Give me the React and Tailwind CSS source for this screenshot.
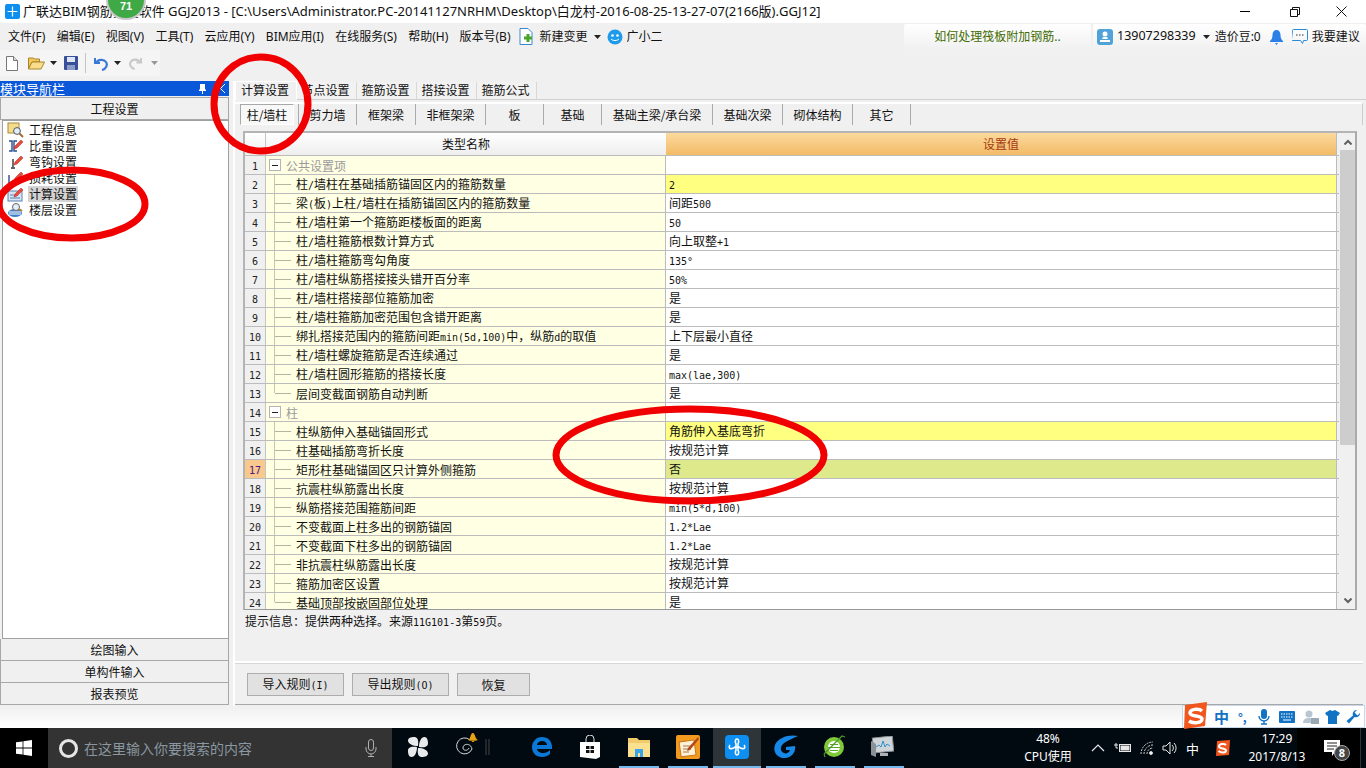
import React from 'react';

const rows = [
  { n: 1, group: true, name: '公共设置项', val: '' },
  { n: 2, name: '柱/墙柱在基础插筋锚固区内的箍筋数量', val: '2', hl: 'y' },
  { n: 3, name: '梁(板)上柱/墙柱在插筋锚固区内的箍筋数量', val: '间距500' },
  { n: 4, name: '柱/墙柱第一个箍筋距楼板面的距离', val: '50' },
  { n: 5, name: '柱/墙柱箍筋根数计算方式', val: '向上取整+1' },
  { n: 6, name: '柱/墙柱箍筋弯勾角度', val: '135°' },
  { n: 7, name: '柱/墙柱纵筋搭接接头错开百分率', val: '50%' },
  { n: 8, name: '柱/墙柱搭接部位箍筋加密', val: '是' },
  { n: 9, name: '柱/墙柱箍筋加密范围包含错开距离', val: '是' },
  { n: 10, name: '绑扎搭接范围内的箍筋间距min(5d,100)中，纵筋d的取值', val: '上下层最小直径' },
  { n: 11, name: '柱/墙柱螺旋箍筋是否连续通过', val: '是' },
  { n: 12, name: '柱/墙柱圆形箍筋的搭接长度', val: 'max(lae,300)' },
  { n: 13, name: '层间变截面钢筋自动判断', val: '是', last: true },
  { n: 14, group: true, name: '柱', val: '' },
  { n: 15, name: '柱纵筋伸入基础锚固形式', val: '角筋伸入基底弯折', hl: 'y' },
  { n: 16, name: '柱基础插筋弯折长度', val: '按规范计算' },
  { n: 17, name: '矩形柱基础锚固区只计算外侧箍筋', val: '否', hl: 'g' },
  { n: 18, name: '抗震柱纵筋露出长度', val: '按规范计算' },
  { n: 19, name: '纵筋搭接范围箍筋间距', val: 'min(5*d,100)' },
  { n: 20, name: '不变截面上柱多出的钢筋锚固', val: '1.2*Lae' },
  { n: 21, name: '不变截面下柱多出的钢筋锚固', val: '1.2*Lae' },
  { n: 22, name: '非抗震柱纵筋露出长度', val: '按规范计算' },
  { n: 23, name: '箍筋加密区设置', val: '按规范计算' },
  { n: 24, name: '基础顶部按嵌固部位处理', val: '是', last: true },
];

const menus = ['文件(F)', '编辑(E)', '视图(V)', '工具(T)', '云应用(Y)', 'BIM应用(I)', '在线服务(S)', '帮助(H)', '版本号(B)'];
const subTabs = [
  { t: '剪力墙', w: 'w-[58px]' }, { t: '框架梁', w: 'w-[59px]' }, { t: '非框架梁', w: 'w-[70px]' },
  { t: '板', w: 'w-[58px]' }, { t: '基础', w: 'w-[58px]' }, { t: '基础主梁/承台梁', w: 'w-[111px]' },
  { t: '基础次梁', w: 'w-[70px]' }, { t: '砌体结构', w: 'w-[70px]' }, { t: '其它', w: 'w-[58px]' },
];

// half-width latin beside 12px CJK, like the bitmap font in the grid
function Mix({ t }) {
  return (
    <span className="whitespace-nowrap">
      {t.split(/([\x20-\x7e°]+)/).map((s, i) =>
        /[\x20-\x7e°]/.test(s)
          ? <span key={i} className="font-['DejaVu_Sans_Mono',monospace] text-[10px]">{s}</span>
          : <span key={i}>{s}</span>
      )}
    </span>
  );
}

function Caret({ c = '#222' }) {
  return <svg width="7" height="4" viewBox="0 0 7 4"><path d="M0 0h7L3.5 4z" fill={c} /></svg>;
}

function NavIcon({ k }) {
  const pen = <path d="M8 8l6-6 2 2-6 6-3 1z" fill="#e84a3c" stroke="#b22" strokeWidth=".5" />;
  return (
    <svg width="18" height="16" viewBox="0 0 18 16" className="shrink-0">
      {k === 0 && <g><rect x="1" y="1" width="11" height="10" fill="#f3dd8c" stroke="#a98a3a" /><circle cx="10" cy="9" r="3.4" fill="#dfeefa" stroke="#555" /><path d="M12.5 11.5l3.5 3.5" stroke="#a07030" strokeWidth="2" /></g>}
      {k === 1 && <g><path d="M2 3h3v10H2M10 3H7v10h3" fill="none" stroke="#2a4d8f" strokeWidth="1.4" />{pen}</g>}
      {k === 2 && <g><path d="M6 5v8M4 14h4" stroke="#333" strokeWidth="1.4" />{pen}</g>}
      {k === 3 && <g><path d="M2 5v8h5M9 9v4" fill="none" stroke="#2a4d8f" strokeWidth="1.4" />{pen}</g>}
      {k === 4 && <g><rect x="1" y="5" width="14" height="10" fill="#d6e6f7" stroke="#5a80b0" /><path d="M3 9h7M3 12h10" stroke="#5a80b0" />{pen}</g>}
      {k === 5 && <g><ellipse cx="8" cy="11" rx="7" ry="4" fill="#3f7fc8" /><path d="M2 10h12M2 12h12" stroke="#fff" /><circle cx="9" cy="5" r="3.5" fill="#e4eef8" stroke="#666" /><path d="M12 7l3 2" stroke="#b08030" strokeWidth="2" /></g>}
    </svg>
  );
}

function Row({ r }) {
  const valBg = r.hl === 'y' ? 'bg-[#ffff80]' : r.hl === 'g' ? 'bg-[#dde98a]' : 'bg-white';
  return (
    <div className="flex h-[19px] shrink-0 border-b border-[#bcbcbc]">
      <div className={r.n === 17
        ? 'w-[21px] shrink-0 border-r border-[#c4c4c4] bg-[#f9c88c] text-[#4b1a8a] flex items-center justify-center'
        : 'w-[21px] shrink-0 border-r border-[#c4c4c4] bg-[#f0f0f0] text-[#222] flex items-center justify-center'}>
        <Mix t={String(r.n)} />
      </div>
      <div className="w-[400px] shrink-0 bg-[#ffffe3] border-r border-[#bcbcbc] flex items-center overflow-hidden">
        {r.group ? (
          <>
            <div className="ml-[3px] w-[12px] h-[12px] border border-[#b4b4b4] bg-white flex items-center justify-center shrink-0">
              <div className="w-[6px] h-px bg-[#222]" />
            </div>
            <span className="ml-[5px] pt-px text-[#9a9a9a]">{r.name}</span>
          </>
        ) : (
          <>
            <div className={r.last ? 'ml-[8px] w-px h-1/2 self-start bg-[#c8c8a8] shrink-0' : 'ml-[8px] w-px self-stretch bg-[#c8c8a8] shrink-0'} />
            <div className="w-[16px] h-px bg-[#b4b4a0] shrink-0" />
            <span className="ml-[5px] pt-px text-[#111]"><Mix t={r.name} /></span>
          </>
        )}
      </div>
      <div className={`w-[671px] shrink-0 pl-[3px] flex items-center border-r border-[#bcbcbc] text-[#111] ${valBg}`}>
        <Mix t={r.val} />
      </div>
    </div>
  );
}

function Taskbar() {
  const runs = ['ml-[227px] w-[40px]', 'ml-[9px] w-[40px]', 'ml-[5px] w-[48px]', 'ml-[5px] w-[40px]', 'ml-[9px] w-[40px]', 'ml-[9px] w-[40px]'];
  return (
    <div className="h-[40px] shrink-0 flex bg-[#010a10] text-white font-['Noto_Sans','Noto_Sans_CJK_SC',sans-serif] relative">
      <div className="w-[48px] bg-black flex items-center justify-center">
        <svg width="16" height="16" viewBox="0 0 16 16"><path d="M0 2.3l6.6-.9v6.2H0zM7.4 1.3L16 0v7.6H7.4zM0 8.4h6.6v6.2L0 13.7zM7.4 8.4H16V16l-8.6-1.3z" fill="#fff" /></svg>
      </div>
      <div className="w-[344px] bg-[#333333] flex items-center pl-[11px]">
        <div className="w-[19px] h-[19px] rounded-full border-[3px] border-[#e6e6e6] shrink-0" />
        <span className="ml-[6px] text-[14px] text-[#8a97a0] font-['Noto_Sans_CJK_SC',sans-serif]">在这里输入你要搜索的内容</span>
        <svg className="ml-[112px]" width="14" height="18" viewBox="0 0 14 18" fill="none" stroke="#b0b0b0"><rect x="4.5" y=".5" width="5" height="11" rx="2.5" /><path d="M2 8v2a5 5 0 0 0 10 0V8M7 15v2M4 17.5h6" /></svg>
      </div>
      <div className="flex flex-col flex-1">
        <div className="flex h-[38px] items-center">
          <svg className="ml-[15px]" width="22" height="22" viewBox="0 0 22 22" fill="#e8eaec"><path d="M11 10C6 10 1 8 1 4.500 1 2 4 1 7 1c3 0 5 2 4 9zM12 11c0-5 2-10 5.500-10C20 1 21 4 21 7c0 3-2 5-9 4zM11 12c5 0 10 2 10 5.500 0 2.500-3 3.500-6 3.500-3 0-5-2-4-9zM10 11c0 5-2 10-5.500 10C2 21 1 18 1 15c0-3 2-5 9-4z" /></svg>
          <svg className="ml-[25px] overflow-visible" width="22" height="20" viewBox="0 0 22 20" fill="none" stroke="#d8d8d8"><path d="M16 3A8 8 0 1 0 18 12C17 6 9 6 9 11c0 3 5 3 6 0" /><path d="M14 3c3-1 2-6 4.500-7S21 2 24 3c-1 1-9 1-10 0zM17.500 3.500a1.500 1.500 0 0 0 3 0z" fill="#e5a414" stroke="none" /></svg>
          <svg className="ml-[9px]" width="6" height="16" viewBox="0 0 6 16" stroke="#444"><path d="M1 0v16M4 0v16" /></svg>
          <svg className="ml-[41px]" width="20" height="22" viewBox="0 0 20 22"><path d="M10 1C4 1 0 6 0 11c0 6 4 10 10 10 3 0 6-1 8-3v-4c-2 2-4 3-7 3-3 0-6-2-6-4h15v-2C20 5 16 1 10 1zM5 9c0-2 3-4 5-4 3 0 5 2 5 4z" fill="#0b78d7" /></svg>
          <svg className="ml-[27px]" width="22" height="24" viewBox="0 0 22 24"><path d="M1 7h20v15l-4 2-16-2z" fill="#fff" /><path d="M7 7V4a4 4 0 0 1 8 0v3" fill="none" stroke="#ddd" /><path d="M7 11h3.500v3H7zM11.500 11H15v3h-3.500zM7 15h3.500v3H7zM11.500 15H15v3h-3.500z" fill="#111" /></svg>
          <svg className="ml-[27px]" width="22" height="20" viewBox="0 0 22 20"><path d="M0 1h9l2 2h11v17H0z" fill="#f0cb6c" /><path d="M0 6h22v14H0z" fill="#fbe08f" /><path d="M7 12h8v8h-3v-4h-2v4H7z" fill="#38a6e8" /></svg>
          <svg className="ml-[26px]" width="24" height="24" viewBox="0 0 24 24"><rect width="24" height="24" rx="2" fill="#f29a1e" /><rect x="4" y="6" width="15" height="15" transform="rotate(-8 11 13)" fill="#fdf2d8" stroke="#c9761a" /><path d="M7 11h8M7 14h8M7 17h6" stroke="#a97a4a" /><path d="M12 13L22 2l1 2-9 11-3 1z" fill="#b3471b" /></svg>
          <div className="ml-[13px] w-[48px] self-stretch bg-[#2e3539] flex items-center justify-center">
            <div className="w-[24px] h-[24px] rounded-[4px] bg-[#0c8ff0] flex items-center justify-center">
              <svg width="18" height="18" viewBox="0 0 18 18" fill="none" stroke="#fff" strokeWidth="1.6"><path d="M9 1c-2 0-2 3-1 5v6c-1 2-1 5 1 5s2-3 1-5V6c1-2 1-5-1-5zM2 7c-1 1-1 3 0 3.500 2 .5 4-.5 5-1.500h4c1 1 3 2 5 1.500 1-.5 1-2.500 0-3.500" /></svg>
            </div>
          </div>
          <svg className="ml-[12px]" width="26" height="24" viewBox="0 0 26 24"><path d="M25 1C17-1 5 2 2 10c-3 8 4 14 11 13 6-1 10-6 9-12l-9 1v3h4c-1 3-4 4-6 3-4-1-4-6-1-9 3-3 9-5 15-8z" fill="#1688e8" /></svg>
          <svg className="ml-[23px]" width="24" height="26" viewBox="0 0 24 26"><circle cx="12" cy="13" r="10" fill="#7fc93b" /><circle cx="12" cy="13" r="6" fill="#fff" /><path d="M6 13h12v1H6zM8 10h8v1H8zM8 16h8v1H8z" fill="#5aa82a" /><path d="M2 20L20 2l3 1M2 20l1 3" fill="none" stroke="#4a9a2a" strokeWidth="1.2" /></svg>
          <svg className="ml-[24px]" width="24" height="22" viewBox="0 0 24 22"><rect x="3" y="1" width="20" height="15" fill="#cfd4d8" stroke="#8a8f94" transform="rotate(-6 13 8)" /><path d="M6 11l3-2 2 2 2-6 2 6 2-3 3 2" fill="none" stroke="#2f90d0" /><path d="M1 5v14l5 2V8z" fill="#8d9296" /><path d="M10 17h8v3h-8z" fill="#aeb3b7" /></svg>
        </div>
        <div className="flex h-[2px]">
          {runs.map((c, i) => <div key={i} className={`${c} bg-[#76b9ed]`} />)}
        </div>
      </div>
      <div className="absolute left-[1016px] top-0 h-[40px] w-[64px] flex flex-col items-center justify-center text-[12px] leading-[18px] font-['Noto_Sans','Noto_Sans_CJK_SC',sans-serif]">
        <span>48%</span><span>CPU使用</span>
      </div>
      <div className="absolute left-[1090px] top-0 h-[40px] flex items-center">
        <svg width="16" height="10" viewBox="0 0 16 10" fill="none" stroke="#e8e8e8" strokeWidth="1.2"><path d="M2 8l6-6 6 6" /></svg>
        <svg className="ml-[8px]" width="18" height="12" viewBox="0 0 18 12" fill="none" stroke="#e8e8e8"><rect x="5.500" y="2.500" width="11" height="7" /><rect x="7" y="4" width="8" height="4" fill="#e8e8e8" /><path d="M0 3h4M2 1v5h2" /></svg>
        <svg className="ml-[8px]" width="14" height="14" viewBox="0 0 14 14" fill="none" stroke="#d0d0d0"><path d="M1 13A12 12 0 0 1 13 1M4 13a9 9 0 0 1 9-9M7 13a6 6 0 0 1 6-6" strokeDasharray="2 1" /><circle cx="11" cy="12" r="1.500" fill="#fff" /></svg>
        <svg className="ml-[8px]" width="16" height="14" viewBox="0 0 16 14" fill="none" stroke="#e8e8e8"><path d="M1 5h3l4-4v12L4 9H1zM10 4a4 4 0 0 1 0 6M12 2a7 7 0 0 1 0 10" /></svg>
        <span className="ml-[8px] text-[13px] font-['Noto_Sans_CJK_SC',sans-serif]">中</span>
        <svg className="ml-[16px]" width="15" height="16" viewBox="0 0 15 16"><path d="M2 1l13-1-1 15-13 1z" fill="#f0561d" /><path d="M11 5C9 3 4 4 4 6.500S11 8 11 10.500 6 13 3.500 11" fill="none" stroke="#fff" strokeWidth="2" /></svg>
      </div>
      <div className="absolute left-[1297px] top-0 h-[40px] w-[64px] bg-[#000] border-r border-[#333] flex items-center justify-center">
        <div className="relative ml-[8px]">
          <svg width="17" height="17" viewBox="0 0 17 17"><path d="M0 0h16v12h-5l-3 4v-4H0z" fill="#fff" /><path d="M3 3h10M3 6h10M3 9h7" stroke="#222" /></svg>
          <span className="absolute -right-[9px] top-[5px] w-[16px] h-[16px] rounded-full bg-[#444] border border-[#aaa] text-[11px] leading-[14px] text-center font-bold">8</span>
        </div>
      </div>
      <div className="absolute left-[1247px] top-0 h-[40px] w-[60px] flex flex-col items-center justify-center text-[12px] leading-[18px] whitespace-nowrap">
        <span>17:29</span><span>2017/8/13</span>
      </div>
    </div>
  );
}

export default function App() {
  const items = ['工程信息', '比重设置', '弯钩设置', '损耗设置', '计算设置', '楼层设置'];
  return (
    <div className="relative w-[1366px] h-[768px] overflow-hidden bg-[#f0f0f0] flex flex-col text-[12px] leading-none text-[#111] font-['Noto_Sans_CJK_SC',sans-serif]">
      {/* title bar */}
      <div className="h-[23px] shrink-0 bg-white flex items-center pl-[5px]">
        <div className="w-[15px] h-[15px] rounded-[2px] bg-[#0c8ff0] flex items-center justify-center">
          <svg width="11" height="11" viewBox="0 0 18 18" fill="none" stroke="#fff" strokeWidth="2"><path d="M9 1v16M1 9h16" /></svg>
        </div>
        <span className="ml-[3px] text-[13px] whitespace-nowrap font-['Noto_Sans','Noto_Sans_CJK_SC',sans-serif]">广联达BIM钢筋算量软件 GGJ2013 - [C:\Users\Administrator.PC-20141127NRHM\Desktop\白龙村-2016-08-25-13-27-07(2166版).GGJ12]</span>
        <div className="ml-auto flex items-center">
          <div className="w-[10px] h-px bg-black" />
          <svg className="ml-[40px]" width="10" height="10" viewBox="0 0 10 10" fill="none" stroke="#111"><path d="M.5 2.500h7v7h-7zM2.500 2.500v-2h7v7h-2" /></svg>
          <svg className="ml-[36px] mr-[19px]" width="11" height="11" viewBox="0 0 11 11" stroke="#111"><path d="M.5.5l10 10M10.500.5l-10 10" /></svg>
        </div>
      </div>

      {/* menu bar */}
      <div className="h-[27px] shrink-0 flex items-center pl-[8px] font-['Noto_Sans','Noto_Sans_CJK_SC',sans-serif]">
        <div className="flex gap-[11.25px]">
          {menus.map(m => <span key={m} className="whitespace-nowrap">{m}</span>)}
        </div>
        <svg className="ml-[8px]" width="14" height="17" viewBox="0 0 14 17"><path d="M1 .5h8l4 4v12H1z" fill="#fff" stroke="#3a8ad0" /><path d="M5 10h8M9 6v8" stroke="#4aa52e" strokeWidth="3" /></svg>
        <span className="ml-[7px] whitespace-nowrap">新建变更</span>
        <span className="ml-[6px]"><Caret /></span>
        <svg className="ml-[6px]" width="16" height="16" viewBox="0 0 16 16"><circle cx="8" cy="8" r="7.500" fill="#1e9bea" /><circle cx="5.500" cy="6.500" r="1.300" fill="#fff" /><circle cx="10.500" cy="6.500" r="1.300" fill="#fff" /><path d="M4 10c2 2 6 2 8 0" stroke="#fff" fill="none" /></svg>
        <span className="ml-[4px] whitespace-nowrap">广小二</span>
        <div className="ml-auto h-[26px] w-[187px] mr-[2px] rounded-t-[2px] bg-gradient-to-b from-white to-[#f0f0f0] flex items-center justify-center text-[#3f6b00]">如何处理筏板附加钢筋..</div>
        <div className="h-[26px] w-[273px] rounded-t-[2px] bg-gradient-to-b from-white to-[#f0f0f0] flex items-center pl-[4px] whitespace-nowrap">
          <div className="w-[16px] h-[16px] rounded-[3px] bg-[#4fa3d8] flex items-center justify-center">
            <svg width="10" height="11" viewBox="0 0 10 11" fill="#fff"><circle cx="5" cy="3" r="2.500" /><path d="M0 9h10v2H0zM3 6h4l1 2H2z" /></svg>
          </div>
          <span className="ml-[4px] text-[12.500px]">13907298339</span>
          <span className="ml-[7px]"><Caret /></span>
          <span className="ml-[5px]">造价豆:0</span>
          <svg className="ml-[9px]" width="13" height="16" viewBox="0 0 13 16"><path d="M6.500 1C4 1 2.500 3 2.500 6c0 3-1 5-2.500 6v1h13v-1c-1.500-1-2.500-3-2.500-6 0-3-1.500-5-4-5z" fill="#2d7fe8" /><path d="M5 14h3l-1.500 2z" fill="#2d7fe8" /></svg>
          <svg className="ml-[9px]" width="16" height="16" viewBox="0 0 16 16" fill="none" stroke="#2a8ad8"><path d="M.5 1.500a1 1 0 0 1 1-1h13a1 1 0 0 1 1 1v9a1 1 0 0 1-1 1h-3l-1 3-2-3h-8a1 1 0 0 1-1-1z" /><path d="M4 6h1.500M7 6h1.500M10 6h1.500" stroke="#333" /></svg>
          <span className="ml-[4px]">我要建议</span>
        </div>
      </div>

      {/* toolbar */}
      <div className="h-[31px] shrink-0">
        <div className="w-[160px] h-[26px] bg-[#f5f5f5] rounded-[2px] flex items-center pl-[6px]">
          <svg width="12" height="15" viewBox="0 0 12 15"><path d="M.5.500h7l4 4v10H.5z" fill="#fff" stroke="#777" /><path d="M7.500.5v4h4" fill="#ddd" stroke="#777" /></svg>
          <svg className="ml-[10px]" width="17" height="14" viewBox="0 0 17 14"><path d="M.5 2h5l1 1h5v3H4L.5 13z" fill="#f3c95a" stroke="#a9842a" /><path d="M4 6h12.500L13 13H.5z" fill="#f9dd8a" stroke="#a9842a" /></svg>
          <span className="ml-[5px]"><Caret /></span>
          <svg className="ml-[7px]" width="14" height="14" viewBox="0 0 14 14"><rect width="14" height="14" rx="1" fill="#3a4f9a" /><rect x="3" y="1" width="8" height="5" fill="#dfe6f5" /><rect x="3" y="9" width="8" height="5" fill="#8c9cc8" /></svg>
          <div className="ml-[7px] w-px h-[20px] bg-[#c4c4c4]" />
          <svg className="ml-[8px]" width="14" height="15" viewBox="0 0 14 15" fill="none"><path d="M1 2v5h5" stroke="#3a78d8" strokeWidth="2" /><path d="M2 7c2-4 8-4 10-1 2 3 0 7-4 8" stroke="#3a78d8" strokeWidth="2.200" /></svg>
          <span className="ml-[6px]"><Caret /></span>
          <svg className="ml-[8px]" width="13" height="14" viewBox="0 0 14 15" fill="none"><path d="M13 2v5H8" stroke="#c8c8c8" strokeWidth="2" /><path d="M12 7C10 3 4 3 2 6c-2 3 0 7 4 8" stroke="#c8c8c8" strokeWidth="2.200" /></svg>
          <span className="ml-[9px]"><Caret c="#999" /></span>
        </div>
      </div>

      {/* main */}
      <div className="h-[625px] shrink-0 flex">
        {/* module navigator */}
        <div className="w-[229px] shrink-0 flex flex-col">
          <div className="h-[15px] bg-[#0a58da] text-white flex items-center text-[13px] pr-[4px]">
            <span>模块导航栏</span>
            <svg className="ml-auto" width="9" height="10" viewBox="0 0 9 10" fill="#fff"><path d="M2 0h5v5l1 1v1H5v3H4V7H1V6l1-1z" /></svg>
            <svg className="ml-[9px]" width="9" height="9" viewBox="0 0 9 9" stroke="#fff"><path d="M0 0l9 9M9 0L0 9" /></svg>
          </div>
          <div className="mt-px h-[23px] border border-[#a8a8a8] flex items-center justify-center">工程设置</div>
          <div className="h-[519px] ml-[2px] border border-[#a0a0a0] bg-white pt-px pl-[4px]">
            {items.map((t, i) => (
              <div key={t} className="h-[16px] flex items-center">
                <NavIcon k={i} />
                <span className={i === 4 ? 'ml-[3px] px-[1px] h-[16px] flex items-center bg-[#d3d3d3]' : 'ml-[3px] px-[1px]'}>{t}</span>
              </div>
            ))}
          </div>
          {['绘图输入', '单构件输入', '报表预览'].map(t => (
            <div key={t} className="h-[22px] border border-t-0 first:border-t border-[#a8a8a8] flex items-center justify-center">{t}</div>
          ))}
        </div>

        {/* settings panel */}
        <div className="ml-[4px] w-[1133px] shrink-0 flex flex-col border-l-2 border-white">
          <div className="h-[19px] flex items-end border-b border-[#d0d0d0] shrink-0 pb-0">
            <div className="w-[62px] h-[19px] -mb-px pb-[2px] pr-[2px] bg-[#f0f0f0] border-t border-x border-white flex items-center justify-center">计算设置</div>
            {['节点设置', '箍筋设置', '搭接设置', '箍筋公式'].map(t => (
              <div key={t} className="w-[60px] h-[17px] pb-px pr-[2px] bg-[#f2f2f2] border-r border-[#d8d8d8] flex items-center justify-center">{t}</div>
            ))}
          </div>
          <div className="mt-[2px] w-[1128px] h-[23px] shrink-0 border-t-2 border-white border-r border-r-[#ccc] flex items-center pl-[5px]">
            <div className="w-[54px] h-[21px] mr-[4px] border border-[#a8a8a8] border-r-white border-b-white bg-[#f8f8f8] flex items-center justify-center">柱/墙柱</div>
            {subTabs.map(s => (
              <div key={s.t} className={`${s.w} h-[21px] border-l border-[#aaa] flex items-center justify-center whitespace-nowrap`}>{s.t}</div>
            ))}
            <div className="h-[21px] border-l border-[#aaa]" />
          </div>

          {/* grid */}
          <div className="mt-[6px] ml-[8px] w-[1114px] h-[479px] shrink-0 border-t-2 border-x-2 border-[#b4b4b4] border-b border-b-[#999] border-r-[#aaa] flex overflow-hidden">
            <div className="flex flex-col w-[1094px] shrink-0">
              <div className="flex h-[23px] shrink-0 border-b border-[#bcbcbc]">
                <div className="w-[21px] shrink-0 border-r border-[#c4c4c4] bg-gradient-to-b from-white to-[#eeeeee]" />
                <div className="w-[400px] shrink-0 bg-gradient-to-b from-white to-[#eeeeee] flex items-center justify-center">类型名称</div>
                <div className="w-[671px] shrink-0 bg-gradient-to-b from-[#fbd99c] to-[#f2bb66] flex items-center justify-center text-[#a63a12] border-r border-[#bcbcbc]">设置值</div>
              </div>
              {rows.map(r => <Row key={r.n} r={r} />)}
            </div>
            <div className="w-[16px] ml-[1px] flex flex-col bg-[#f0f0f0]">
              <div className="h-[17px] flex items-center justify-center shrink-0">
                <svg width="8" height="6" viewBox="0 0 8 6" fill="none" stroke="#606060" strokeWidth="2"><path d="M.5 5.500L4 2l3.500 3.500" /></svg>
              </div>
              <div className="h-[295px] bg-[#cdcdcd] shrink-0" />
              <div className="mt-auto h-[17px] flex items-center justify-center shrink-0">
                <svg width="8" height="6" viewBox="0 0 8 6" fill="none" stroke="#606060" strokeWidth="2"><path d="M.5.500L4 4l3.500-3.500" /></svg>
              </div>
            </div>
          </div>

          <div className="ml-[10px] mt-[3px] h-[16px] shrink-0 flex items-center whitespace-nowrap"><Mix t="提示信息：提供两种选择。来源11G101-3第59页。" /></div>
          <div className="h-[34px] shrink-0 border-b-2 border-white w-[1128px]" />

          <div className="h-[42px] shrink-0 w-[1128px] border-b border-[#a8a8a8] flex items-start pt-[9px] pl-[12px] gap-[8px] border-t border-t-[#d8d8d8]">
            <button className="w-[97px] h-[23px] bg-[#e1e1e1] border border-[#adadad] flex items-center justify-center"><Mix t="导入规则(I)" /></button>
            <button className="w-[97px] h-[23px] bg-[#e1e1e1] border border-[#adadad] flex items-center justify-center"><Mix t="导出规则(O)" /></button>
            <button className="w-[73px] h-[23px] bg-[#e1e1e1] border border-[#adadad] flex items-center justify-center">恢复</button>
          </div>
        </div>
      </div>

      <div className="h-[22px] shrink-0 bg-gradient-to-b from-[#f0f0f0] to-white" />
      <Taskbar />

      {/* sogou input bar */}
      <div className="absolute left-[1182px] top-[705px] w-[183px] h-[23px] bg-white border border-[#c8d8ea] flex items-center">
        <svg className="-ml-px -mt-[3px]" width="27" height="27" viewBox="0 0 27 27"><path d="M3 3l22-3-2 24-21 3z" fill="#f0561d" /><path d="M20 9c-3-3-12-2-12 2s12 2 12 6-9 5-13 2" fill="none" stroke="#fff" strokeWidth="3.500" /></svg>
        <span className="ml-[5px] text-[#1272c4] text-[15px] font-bold">中</span>
        <span className="ml-[9px] text-[#1272c4] text-[12px] font-bold whitespace-nowrap">°,</span>
        <svg className="ml-[11px]" width="12" height="16" viewBox="0 0 12 16"><rect x="3" width="6" height="10" rx="3" fill="#1272c4" /><path d="M1 7a5 5 0 0 0 10 0M6 12v3M3 15h6" fill="none" stroke="#1272c4" strokeWidth="1.400" /></svg>
        <svg className="ml-[9px]" width="16" height="12" viewBox="0 0 16 12"><rect width="16" height="12" rx="1" fill="#1272c4" /><path d="M2 3h12M2 6h12" stroke="#fff" strokeDasharray="1.500 1" /><path d="M4 9h8" stroke="#fff" /></svg>
        <svg className="ml-[8px]" width="16" height="14" viewBox="0 0 16 14" fill="#b8c6d2"><circle cx="6" cy="4" r="3.500" /><path d="M0 13c0-4 3-5 6-5s6 1 6 5z" /><rect x="8" y="8" width="8" height="6" fill="#9aa8b4" /></svg>
        <svg className="ml-[6px]" width="15" height="14" viewBox="0 0 15 14" fill="#1272c4"><path d="M5 0l2.500 1L10 0l5 3-2 3-1-.5V14H3V5.500L2 6 0 3z" /></svg>
        <svg className="ml-[6px]" width="14" height="14" viewBox="0 0 14 14" fill="#1272c4"><path d="M14 3a4 4 0 0 1-5.500 4L3 13.500 .5 11 7 5.500A4 4 0 0 1 11 0L8.500 2.500l3 3z" /></svg>
      </div>

      {/* green floating counter */}
      <div className="absolute left-[106px] -top-[20px] w-[40px] h-[40px] rounded-full bg-[#3fa946] border-2 border-[#c9c9c9] flex items-end justify-center pb-[6px] text-white text-[11px] font-bold font-['Liberation_Sans',sans-serif]">71</div>

      {/* hand drawn marks */}
      <svg className="absolute left-0 top-0 pointer-events-none" width="1366" height="768" fill="none" stroke="#f00000" strokeWidth="7">
        <ellipse cx="261" cy="104" rx="47" ry="47" />
        <ellipse cx="72" cy="204" rx="73" ry="34" />
        <ellipse cx="690" cy="455" rx="134" ry="46" />
      </svg>
    </div>
  );
}
